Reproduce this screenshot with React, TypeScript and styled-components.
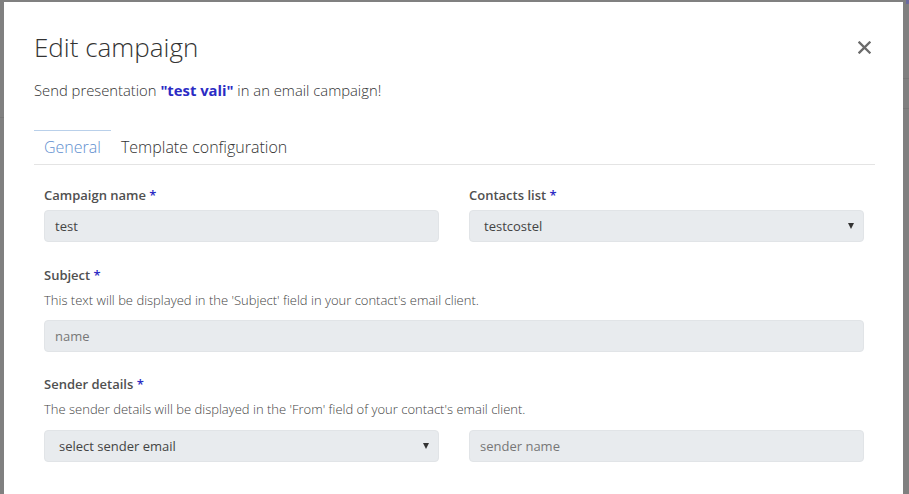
import React from "react";
import styled, { createGlobalStyle } from "styled-components";

const Global = createGlobalStyle`
  html, body {
    margin: 0;
    padding: 0;
    height: 494px;
    overflow: hidden;
    background: #808080;
    font-family: "Open Sans", "Noto Sans", sans-serif;
  }
  * { box-sizing: border-box; }
`;

const Backdrop = styled.div`
  height: 494px;
  padding: 2px 6px 0 4px;
  background:
    linear-gradient(#777, #777) right 0 top 78px / 6px 1px no-repeat,
    linear-gradient(#777, #777) right 0 top 108px / 6px 1px no-repeat,
    linear-gradient(#6a6aa0, #6a6aa0) right 0 top 0 / 3px 4px no-repeat,
    linear-gradient(#777, #777) left 0 top 117px / 4px 1px no-repeat,
    #808080;
`;

const Modal = styled.div`
  background: #fff;
  height: 600px;
  padding: 30px 28px 0 30px;
`;

const Header = styled.div`
  display: flex;
  align-items: center;
  justify-content: space-between;
`;

const Title = styled.h1`
  margin: 0;
  font-size: 26px;
  line-height: 31px;
  font-weight: 300;
  color: #333;
`;

const Close = styled.button`
  border: 0;
  background: none;
  padding: 0;
  margin-right: 2px;
  width: 17px;
  height: 17px;
  display: flex;
  align-items: center;
  justify-content: center;
  cursor: pointer;
`;

const Subtitle = styled.p`
  margin: 17px 0 0;
  font-size: 14.8px;
  line-height: 20px;
  font-weight: 300;
  color: #333;
`;

const Highlight = styled.strong`
  font-weight: 700;
  color: #2b2bc4;
`;

const TabBar = styled.div`
  display: flex;
  margin-top: 30px;
  border-bottom: 1px solid #e4e4e4;
`;

const Tab = styled.div<{ $active?: boolean }>`
  padding: 5px 10px 6px;
  border-top: 1px solid ${(p) => (p.$active ? "#b9d0ea" : "transparent")};
  font-size: 16px;
  line-height: 22px;
  font-weight: 300;
  color: ${(p) => (p.$active ? "#5f8fcf" : "#333")};
`;

const Form = styled.div`
  padding: 21px 11px 0 10px;
  display: flex;
  flex-direction: column;
`;

const Row = styled.div<{ $mt?: number }>`
  display: grid;
  grid-template-columns: 1fr 1fr;
  column-gap: 30px;
  margin-top: ${(p) => p.$mt ?? 0}px;
`;

const Group = styled.div<{ $mt?: number }>`
  display: flex;
  flex-direction: column;
  margin-top: ${(p) => p.$mt ?? 0}px;
`;

const Label = styled.label`
  font-size: 13px;
  line-height: 18px;
  font-weight: 600;
  color: #505050;
`;

const Star = styled.span`
  color: #2b2bc4;
`;

const Help = styled.div`
  margin-top: 8px;
  font-size: 13px;
  line-height: 17px;
  font-weight: 300;
  color: #444;
`;

const Field = styled.div<{ $mt?: number; $pl?: number; $muted?: boolean }>`
  margin-top: ${(p) => p.$mt ?? 6}px;
  height: 32px;
  background: #e8ebee;
  border: 1px solid #e1e4e7;
  border-radius: 4px;
  display: flex;
  align-items: center;
  justify-content: space-between;
  padding: 0 9px 0 ${(p) => p.$pl ?? 10}px;
  font-size: 13px;
  color: ${(p) => (p.$muted ? "#777" : "#444")};
`;

const Arrow = styled.span`
  width: 0;
  height: 0;
  border-left: 3px solid transparent;
  border-right: 3px solid transparent;
  border-top: 6px solid #333;
`;

export default function App() {
  return (
    <>
      <Global />
      <Backdrop>
        <Modal>
          <Header>
            <Title>Edit campaign</Title>
            <Close aria-label="close">
              <svg width="13" height="13" viewBox="0 0 13 13">
                <path d="M1.5 1.5 L11.5 11.5 M11.5 1.5 L1.5 11.5" stroke="#6b6b6b" strokeWidth="2.3" strokeLinecap="square" />
              </svg>
            </Close>
          </Header>
          <Subtitle>
            Send presentation <Highlight>"test vali"</Highlight> in an email campaign!
          </Subtitle>
          <TabBar>
            <Tab $active>General</Tab>
            <Tab>Template configuration</Tab>
          </TabBar>
          <Form>
            <Row>
              <Group>
                <Label>
                  Campaign name <Star>*</Star>
                </Label>
                <Field>test</Field>
              </Group>
              <Group>
                <Label>
                  Contacts list <Star>*</Star>
                </Label>
                <Field $pl={14}>
                  testcostel
                  <Arrow />
                </Field>
              </Group>
            </Row>
            <Group $mt={24}>
              <Label>
                Subject <Star>*</Star>
              </Label>
              <Help>This text will be displayed in the 'Subject' field in your contact's email client.</Help>
              <Field $mt={11} $muted>
                name
              </Field>
            </Group>
            <Group $mt={23}>
              <Label>
                Sender details <Star>*</Star>
              </Label>
              <Help>The sender details will be displayed in the 'From' field of your contact's email client.</Help>
              <Row $mt={12}>
                <Field $mt={0} $pl={14}>
                  select sender email
                  <Arrow />
                </Field>
                <Field $mt={0} $muted>
                  sender name
                </Field>
              </Row>
            </Group>
          </Form>
        </Modal>
      </Backdrop>
    </>
  );
}
